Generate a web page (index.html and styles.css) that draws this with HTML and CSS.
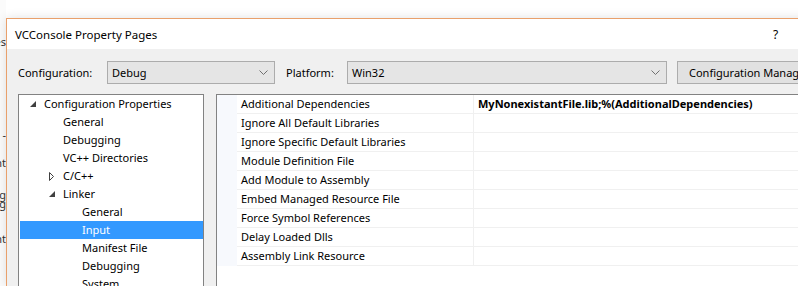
FILE: index.html
```html
<!DOCTYPE html>
<html lang="en">
<head>
    <meta charset="UTF-8">
    <title>VCConsole Property Pages</title>
    <link rel="stylesheet" href="styles.css">
</head>
<body>
    <div class="desktop">
        <div class="behind">
            <div class="frag f1">Properties</div>
            <div class="frag f2">-</div>
            <div class="frag f3">Element</div>
            <div class="frag f4">string</div>
            <div class="frag f5">string</div>
            <div class="frag f6">Element</div>
        </div>

        <div class="window">
            <div class="titlebar">
                <span class="title">VCConsole Property Pages</span>
                <span class="help">?</span>
            </div>

            <div class="body">
                <div class="toolbar">
                    <span class="label">Configuration:</span>
                    <div class="combo combo-config">
                        <span>Debug</span>
                        <svg class="chev" width="9" height="5" viewBox="0 0 9 5"><path d="M0.5 0.5 L4.5 4.5 L8.5 0.5" fill="none" stroke="#707070" stroke-width="1"/></svg>
                    </div>
                    <span class="label label-platform">Platform:</span>
                    <div class="combo combo-platform">
                        <span>Win32</span>
                        <svg class="chev" width="9" height="5" viewBox="0 0 9 5"><path d="M0.5 0.5 L4.5 4.5 L8.5 0.5" fill="none" stroke="#707070" stroke-width="1"/></svg>
                    </div>
                    <button class="btn">Configuration Manager...</button>
                </div>

                <div class="panels">
                    <div class="tree">
                        <div class="node lvl0">
                            <svg class="exp" width="6" height="6" viewBox="0 0 6 6"><path d="M6 0 L6 6 L0 6 Z" fill="#404040"/></svg>
                            <span>Configuration Properties</span>
                        </div>
                        <div class="node lvl1"><span>General</span></div>
                        <div class="node lvl1"><span>Debugging</span></div>
                        <div class="node lvl1"><span>VC++ Directories</span></div>
                        <div class="node lvl1">
                            <svg class="exp col" width="5" height="9" viewBox="0 0 5 9"><path d="M0.5 0.5 L4.5 4.5 L0.5 8.5 Z" fill="none" stroke="#404040" stroke-width="1"/></svg>
                            <span>C/C++</span>
                        </div>
                        <div class="node lvl1">
                            <svg class="exp" width="6" height="6" viewBox="0 0 6 6"><path d="M6 0 L6 6 L0 6 Z" fill="#404040"/></svg>
                            <span>Linker</span>
                        </div>
                        <div class="node lvl2"><span>General</span></div>
                        <div class="node lvl2 selected"><span>Input</span></div>
                        <div class="node lvl2"><span>Manifest File</span></div>
                        <div class="node lvl2"><span>Debugging</span></div>
                        <div class="node lvl2"><span>System</span></div>
                    </div>

                    <div class="grid">
                        <div class="rows">
                            <div class="row">
                                <div class="name">Additional Dependencies</div>
                                <div class="value">MyNonexistantFile.lib;%(AdditionalDependencies)</div>
                            </div>
                            <div class="row"><div class="name">Ignore All Default Libraries</div><div class="value"></div></div>
                            <div class="row"><div class="name">Ignore Specific Default Libraries</div><div class="value"></div></div>
                            <div class="row"><div class="name">Module Definition File</div><div class="value"></div></div>
                            <div class="row"><div class="name">Add Module to Assembly</div><div class="value"></div></div>
                            <div class="row"><div class="name">Embed Managed Resource File</div><div class="value"></div></div>
                            <div class="row"><div class="name">Force Symbol References</div><div class="value"></div></div>
                            <div class="row"><div class="name">Delay Loaded Dlls</div><div class="value"></div></div>
                            <div class="row"><div class="name">Assembly Link Resource</div><div class="value"></div></div>
                        </div>
                    </div>
                </div>
            </div>
        </div>
    </div>
</body>
</html>
```

FILE: styles.css
```css
body {
    margin: 0;
    width: 798px;
    height: 286px;
    overflow: hidden;
    background: #ffffff;
    font-family: 'Noto Sans', 'Open Sans', sans-serif;
    font-size: 11px;
    color: #000;
}
.desktop {
    display: flex;
    height: 286px;
    overflow: hidden;
}
.behind {
    width: 6px;
    flex-shrink: 0;
    overflow: hidden;
    display: flex;
    flex-direction: column;
    align-items: flex-end;
    background: #fbfbfb;
    color: #333;
}
.frag {
    white-space: nowrap;
    line-height: 9px;
    height: 9px;
}
.f1 { margin-top: 37px; }
.f2 { margin-top: 84px; }
.f3 { margin-top: 19px; }
.f4 { margin-top: 23px; }
.f5 { margin-top: 0; }
.f6 { margin-top: 26px; }

.window {
    margin-top: 18px;
    width: 900px;
    flex-shrink: 0;
    border-top: 1px solid #e9a06b;
    border-left: 1px solid #e9a06b;
    box-shadow: 0 0 10px rgba(0, 0, 0, 0.12);
    display: flex;
    flex-direction: column;
}
.titlebar {
    height: 30px;
    flex-shrink: 0;
    background: #ffffff;
    display: flex;
    align-items: center;
    padding-left: 8px;
}
.title {
    flex: 0 0 758px;
    font-size: 11.5px;
}
.help {
    font-size: 12px;
}
.body {
    background: #f0f0f0;
    flex: 1;
    padding: 12px 0 0 11px;
}
.toolbar {
    display: flex;
    align-items: center;
    height: 22px;
}
.label {
    width: 89px;
}
.label-platform {
    margin-left: 11px;
    width: 61px;
}
.combo {
    box-sizing: border-box;
    height: 23px;
    background: #e5e5e5;
    border: 1px solid #acacac;
    display: flex;
    align-items: center;
    justify-content: space-between;
    padding: 0 6px 0 4px;
}
.combo-config { width: 168px; }
.combo-platform { width: 320px; }
.chev {
    margin-top: 1px;
}
.btn {
    margin-left: 10px;
    box-sizing: border-box;
    height: 23px;
    width: 160px;
    background: #e1e1e1;
    border: 1px solid #adadad;
    font-family: inherit;
    font-size: 11px;
    text-align: left;
    padding: 0 0 0 11px;
    white-space: nowrap;
}
.panels {
    display: flex;
    gap: 12px;
    margin-top: 11px;
}
.tree {
    width: 183px;
    height: 200px;
    background: #fff;
    border: 1px solid #828282;
    padding: 0 0 0 1px;
    flex-shrink: 0;
}
.node {
    height: 18px;
    display: flex;
    align-items: center;
    position: relative;
    white-space: nowrap;
}
.node span {
    line-height: 18px;
}
.lvl0 { padding-left: 24px; }
.lvl1 { padding-left: 43px; }
.lvl2 { padding-left: 62px; }
.exp {
    position: absolute;
}
.lvl0 .exp { left: 10px; top: 6px; }
.lvl1 .exp { left: 29px; top: 6px; }
.lvl1 .exp.col { left: 29px; top: 5px; }
.selected {
    background: #3399ff;
    color: #fff;
}
.grid {
    flex: 1;
    height: 200px;
    background: #fff;
    border: 1px solid #828282;
}
.rows {
    border-left: 20px solid #f7f9fd;
}
.row {
    display: flex;
    height: 19px;
    box-sizing: border-box;
    border-bottom: 1px solid #f0f0f0;
}
.name {
    box-sizing: border-box;
    width: 237px;
    padding-left: 4px;
    line-height: 18px;
    border-right: 1px solid #f0f0f0;
    white-space: nowrap;
}
.value {
    flex: 1;
    padding-left: 4px;
    line-height: 18px;
    font-weight: bold;
    white-space: nowrap;
}
```
